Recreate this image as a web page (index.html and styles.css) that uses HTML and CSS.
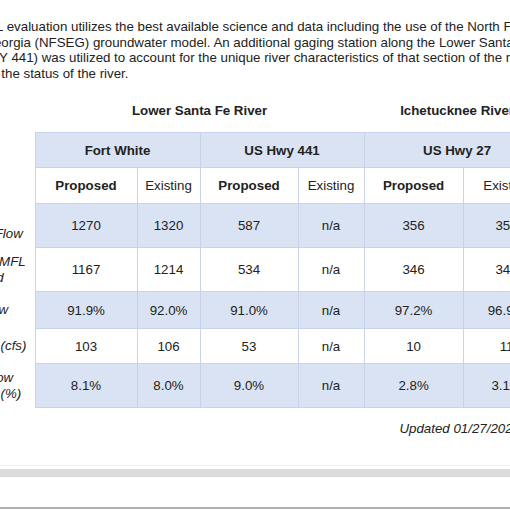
FILE: index.html
```html
<!DOCTYPE html>
<html lang="en">
<head>
  <meta charset="UTF-8">
  <title>MFL Evaluation - Proposed Flows</title>
  <link rel="stylesheet" href="styles.css">
</head>
<body>

  <div class="doc">
    <!-- intro text, the page is cropped so the line starts fall off the left edge -->
    <p class="intro">
      <span class="line">The draft MFL evaluation utilizes the best available science and data including the use of the North Florida</span>
      <span class="line">Southeast Georgia (NFSEG) groundwater model. An additional gaging station along the Lower Santa Fe River</span>
      <span class="line">area (US HWY 441) was utilized to account for the unique river characteristics of that section of the river</span>
      <span class="line">and to gauge the status of the river.</span>
    </p>

    <table class="flows">
      <colgroup>
        <col class="c-label">
        <col class="c-fw-p"><col class="c-fw-e">
        <col class="c-441-p"><col class="c-441-e">
        <col class="c-27-p"><col class="c-27-e">
      </colgroup>
      <tr class="rivers">
        <td class="label"></td>
        <th colspan="4">Lower Santa Fe River</th>
        <th colspan="2">Ichetucknee River</th>
      </tr>
      <tr class="sites shade">
        <td class="label"></td>
        <th colspan="2">Fort White</th>
        <th colspan="2">US Hwy 441</th>
        <th colspan="2">US Hwy 27</th>
      </tr>
      <tr class="kinds">
        <td class="label"></td>
        <th>Proposed</th><td>Existing</td>
        <th>Proposed</th><td>Existing</td>
        <th>Proposed</th><td>Existing</td>
      </tr>
      <tr class="shade tall">
        <td class="label">Estimated<br>Baseline Flow</td>
        <td>1270</td><td>1320</td><td>587</td><td>n/a</td><td>356</td><td>358</td>
      </tr>
      <tr class="tall">
        <td class="label">Flow with MFL<br>Authorized</td>
        <td>1167</td><td>1214</td><td>534</td><td>n/a</td><td>346</td><td>347</td>
      </tr>
      <tr class="shade mid">
        <td class="label">Net % Flow</td>
        <td>91.9%</td><td>92.0%</td><td>91.0%</td><td>n/a</td><td>97.2%</td><td>96.9%</td>
      </tr>
      <tr class="short">
        <td class="label">Decrease (cfs)</td>
        <td>103</td><td>106</td><td>53</td><td>n/a</td><td>10</td><td>11</td>
      </tr>
      <tr class="shade tall">
        <td class="label">Annual Flow<br>Decrease (%)</td>
        <td>8.1%</td><td>8.0%</td><td>9.0%</td><td>n/a</td><td>2.8%</td><td>3.1%</td>
      </tr>
    </table>

    <p class="updated">Updated 01/27/2023</p>
  </div>

  <div class="page-end"></div>
  <div class="page-bar"></div>
  <div class="page-next"></div>

</body>
</html>
```

FILE: styles.css
```css
html, body { margin: 0; padding: 0; overflow: hidden; background: #fff; }
body { font-family: "Liberation Sans", Arial, sans-serif; font-size: 13.3px; color: #222; }

.doc { width: 630px; margin-left: -80px; padding-top: 19px; }

.intro { margin: 0; white-space: nowrap; line-height: 15.6px; }
.intro .line { display: block; }

.flows { width: 630px; table-layout: fixed; border-collapse: collapse; margin-top: 22px; }
.c-label { width: 115px; }
.c-fw-p { width: 102px; }
.c-fw-e { width: 63px; }
.c-441-p { width: 98px; }
.c-441-e { width: 66px; }
.c-27-p { width: 99px; }
.c-27-e { width: 87px; }

.flows td, .flows th { border: 1px solid #c8d2e8; text-align: center; padding: 0 4px; white-space: nowrap; }
.flows th { font-weight: bold; }
.shade td, .shade th { background: #dae3f3; }

.flows .label { border: none; background: #fff; text-align: left; font-style: italic; padding: 0 0 0 20px; line-height: 16px; }

.rivers th, .rivers td { border: none; background: none; padding: 0 0 14px; }
.sites { height: 35px; }
.kinds { height: 36px; }
.tall { height: 44px; }
.mid { height: 37px; }
.short { height: 35px; }

.updated { margin: 13px 0 0; padding-right: 30px; text-align: right; font-style: italic; }

.page-end { margin-top: 29px; height: 3px; border-top: 1px solid #f0f0f0; }
.page-bar { height: 8px; background: #dcdcdc; }
.page-next { height: 30px; border-bottom: 2px solid #b0b0b0; }
```
